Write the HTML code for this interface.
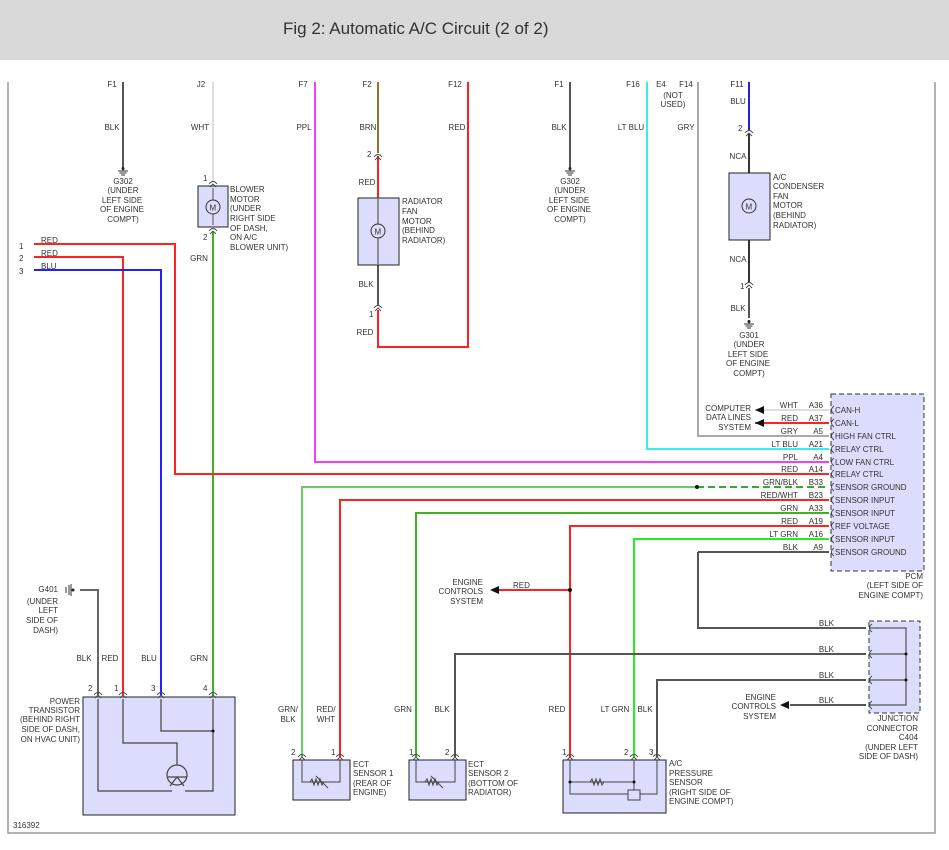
<!DOCTYPE html>
<html><head><meta charset="utf-8"><style>
body{margin:0;width:949px;height:850px;background:#fff;overflow:hidden;font-family:"Liberation Sans",sans-serif}
.hd{position:absolute;left:0;top:0;width:949px;height:60px;background:#d9d9d9}
.hd span{position:absolute;left:283px;top:19px;font-size:17px;color:#333}
svg{position:absolute;left:0;top:0}
text{font-family:"Liberation Sans",sans-serif;font-size:8px;fill:#333}
</style></head><body>
<div class="hd"><span>Fig 2: Automatic A/C Circuit (2 of 2)</span></div>
<svg width="949" height="850" viewBox="0 0 949 850">
<defs>
<g id="gnd"><line x1="0" y1="0" x2="0" y2="4" stroke="#333" stroke-width="1.2"/><line x1="-5" y1="4" x2="5" y2="4" stroke="#333"/><line x1="-3.5" y1="6" x2="3.5" y2="6" stroke="#333"/><line x1="-2" y1="8" x2="2" y2="8" stroke="#333"/><circle cx="0" cy="1.5" r="1.5" fill="#222"/></g>
<g id="pin"><path d="M-4,3 Q0,-2 4,3" fill="none" stroke="#444" stroke-width="0.9"/><path d="M-3,6 L0,3 L3,6" fill="none" stroke="#444" stroke-width="0.9"/></g>
<g id="pinL"><path d="M3,-4 Q-2,0 3,4" fill="none" stroke="#444" stroke-width="0.9"/></g>
</defs>
<!-- frame -->
<g stroke="#999" stroke-width="1.5" fill="none"><path d="M8,82 V833 H935 V82"/></g>
<!-- column wires -->
<g fill="none" stroke-width="2">
<line x1="123" y1="82" x2="123" y2="167" stroke="#555"/>
<line x1="213" y1="82" x2="213" y2="182" stroke="#ddd"/>
<line x1="213" y1="232" x2="213" y2="695" stroke="#3cb521"/>
<path d="M315,82 V462 H829" stroke="#f43df4"/>
<line x1="378" y1="82" x2="378" y2="153" stroke="#8b7530"/>
<line x1="378" y1="156" x2="378" y2="200" stroke="#f22"/>
<line x1="378" y1="265" x2="378" y2="305" stroke="#555"/>
<path d="M378,310 V347 H468 V82" stroke="#f22"/>
<path d="M34,244 H175 V474 H829" stroke="#f22"/>
<path d="M34,257 H123 V695" stroke="#f22"/>
<path d="M34,270 H161 V695" stroke="#22f"/>
<line x1="570" y1="82" x2="570" y2="167" stroke="#555"/>
<path d="M647,82 V449 H829" stroke="#3ee"/>
<path d="M698,82 V436 H829" stroke="#aaa"/>
<line x1="749" y1="82" x2="749" y2="130" stroke="#22d"/>
<line x1="749" y1="134" x2="749" y2="282" stroke="#333"/>
<line x1="749" y1="288" x2="749" y2="318" stroke="#555"/>
<line x1="755" y1="410" x2="829" y2="410" stroke="#ddd"/>
<line x1="755" y1="423" x2="829" y2="423" stroke="#f22"/>
<path d="M302,757 V487 H697" stroke="#6c6"/>
<line x1="697" y1="487" x2="829" y2="487" stroke="#3a3" stroke-dasharray="7,4"/>
<path d="M340,757 V500 H829" stroke="#f22"/>
<path d="M416,757 V513 H829" stroke="#3cb521"/>
<path d="M570,757 V526 H829" stroke="#f22"/>
<path d="M634,757 V539 H829" stroke="#2e2"/>
<path d="M698,552 H829" stroke="#555"/>
<path d="M698,552 V628 H866" stroke="#555"/>
<path d="M455,757 V654 H866" stroke="#555"/>
<path d="M657,757 V680 H866" stroke="#555"/>
<path d="M790,705 H866" stroke="#555"/>
<path d="M498,590 H570" stroke="#f22"/>
<path d="M80,590 H98 V695" stroke="#666"/>
</g>
<circle cx="697" cy="487" r="2" fill="#111"/><circle cx="570" cy="590" r="2" fill="#111"/>
<path d="M490,590 L499,586 L499,594 Z" fill="#111"/>
<path d="M780,705 L789,701 L789,709 Z" fill="#111"/>
<path d="M755,410 L764,406 L764,414 Z" fill="#111"/>
<path d="M755,423 L764,419 L764,427 Z" fill="#111"/>
<!-- G401 symbol -->
<g stroke="#333"><line x1="66" y1="587" x2="66" y2="593"/><line x1="69" y1="585" x2="69" y2="595"/><line x1="71" y1="584" x2="71" y2="596"/></g><circle cx="73" cy="590" r="1.5" fill="#222"/>
<!-- grounds -->
<use href="#gnd" x="123" y="167"/><use href="#gnd" x="570" y="167"/><use href="#gnd" x="749" y="320"/>
<!-- blower motor -->
<rect x="198" y="186" width="30" height="41" fill="#dcdcfc" stroke="#222"/>
<line x1="213" y1="188" x2="213" y2="225" stroke="#555"/>
<circle cx="213" cy="207" r="7" fill="#dcdcfc" stroke="#333"/><text x="209.5" y="210.5" font-size="9">M</text>
<use href="#pin" x="213" y="181"/><use href="#pin" x="213" y="228"/>
<!-- radiator fan -->
<rect x="358" y="198" width="41" height="67" fill="#dcdcfc" stroke="#222"/>
<line x1="378" y1="198" x2="378" y2="265" stroke="#777" stroke-width="1.5"/>
<circle cx="378" cy="231" r="7" fill="#dcdcfc" stroke="#333"/><text x="374.5" y="234.5" font-size="9">M</text>
<use href="#pin" x="378" y="154"/><use href="#pin" x="378" y="305"/>
<!-- condenser -->
<rect x="729" y="173" width="41" height="67" fill="#dcdcfc" stroke="#222"/>
<circle cx="749" cy="206" r="7" fill="#dcdcfc" stroke="#333"/><text x="745.5" y="209.5" font-size="9">M</text>
<use href="#pin" x="749" y="130"/><use href="#pin" x="749" y="282"/>
<!-- PCM -->
<rect x="831" y="394" width="93" height="177" fill="#dcdcfc" stroke="#333" stroke-dasharray="5,3"/>
<g>
<use href="#pinL" x="831" y="410"/><use href="#pinL" x="831" y="423"/><use href="#pinL" x="831" y="436"/><use href="#pinL" x="831" y="449"/><use href="#pinL" x="831" y="462"/><use href="#pinL" x="831" y="474"/><use href="#pinL" x="831" y="487"/><use href="#pinL" x="831" y="500"/><use href="#pinL" x="831" y="513"/><use href="#pinL" x="831" y="526"/><use href="#pinL" x="831" y="539"/><use href="#pinL" x="831" y="552"/>
</g>
<g>
<text x="835" y="413">CAN-H</text><text x="835" y="426">CAN-L</text><text x="835" y="439">HIGH FAN CTRL</text><text x="835" y="452">RELAY CTRL</text><text x="835" y="465">LOW FAN CTRL</text><text x="835" y="477">RELAY CTRL</text><text x="835" y="490">SENSOR GROUND</text><text x="835" y="503">SENSOR INPUT</text><text x="835" y="516">SENSOR INPUT</text><text x="835" y="529">REF VOLTAGE</text><text x="835" y="542">SENSOR INPUT</text><text x="835" y="555">SENSOR GROUND</text>
</g>
<g text-anchor="end">
<text x="798" y="408">WHT</text><text x="823" y="408">A36</text>
<text x="798" y="421">RED</text><text x="823" y="421">A37</text>
<text x="798" y="434">GRY</text><text x="823" y="434">A5</text>
<text x="798" y="447">LT BLU</text><text x="823" y="447">A21</text>
<text x="798" y="460">PPL</text><text x="823" y="460">A4</text>
<text x="798" y="472">RED</text><text x="823" y="472">A14</text>
<text x="798" y="485">GRN/BLK</text><text x="823" y="485">B33</text>
<text x="798" y="498">RED/WHT</text><text x="823" y="498">B23</text>
<text x="798" y="511">GRN</text><text x="823" y="511">A33</text>
<text x="798" y="524">RED</text><text x="823" y="524">A19</text>
<text x="798" y="537">LT GRN</text><text x="823" y="537">A16</text>
<text x="798" y="550">BLK</text><text x="823" y="550">A9</text>
<text x="751" y="411">COMPUTER</text><text x="751" y="420">DATA LINES</text><text x="751" y="430">SYSTEM</text>
<text x="923" y="579">PCM</text><text x="923" y="588">(LEFT SIDE OF</text><text x="923" y="598">ENGINE COMPT)</text>
</g>
<!-- junction connector -->
<rect x="869" y="621" width="51" height="92" fill="#dcdcfc" stroke="#333" stroke-dasharray="5,3"/>
<path d="M869,628 H906 V705 H869 M869,654 H906 M869,680 H906" fill="none" stroke="#555" stroke-width="1.2"/>
<circle cx="906" cy="654" r="1.5" fill="#111"/><circle cx="906" cy="680" r="1.5" fill="#111"/>
<use href="#pinL" x="869" y="628"/><use href="#pinL" x="869" y="654"/><use href="#pinL" x="869" y="680"/><use href="#pinL" x="869" y="705"/>
<g text-anchor="end"><text x="834" y="626">BLK</text><text x="834" y="652">BLK</text><text x="834" y="678">BLK</text><text x="834" y="703">BLK</text>
<text x="918" y="721">JUNCTION</text><text x="918" y="731">CONNECTOR</text><text x="918" y="740">C404</text><text x="918" y="750">(UNDER LEFT</text><text x="918" y="759">SIDE OF DASH)</text>
<text x="776" y="700">ENGINE</text><text x="776" y="709">CONTROLS</text><text x="776" y="719">SYSTEM</text>
<text x="483" y="585">ENGINE</text><text x="483" y="594">CONTROLS</text><text x="483" y="604">SYSTEM</text>
<text x="58" y="592">G401</text><text x="58" y="604">(UNDER</text><text x="58" y="613">LEFT</text><text x="58" y="623">SIDE OF</text><text x="58" y="633">DASH)</text>
<text x="80" y="704">POWER</text><text x="80" y="713">TRANSISTOR</text><text x="80" y="722">(BEHIND RIGHT</text><text x="80" y="732">SIDE OF DASH,</text><text x="80" y="742">ON HVAC UNIT)</text>
</g>
<text x="513" y="588">RED</text>
<!-- power transistor -->
<rect x="83" y="697" width="152" height="118" fill="#dcdcfc" stroke="#222"/>
<g fill="none" stroke="#444" stroke-width="1.2">
<path d="M98,699 V791 H172"/><path d="M123,699 V743 H177 V765"/><path d="M161,699 V731 H213"/><path d="M213,699 V791 H185"/>
<circle cx="177" cy="775" r="10"/><path d="M168,777 H187 M177,777 L170,786 M177,777 L184,786"/>
</g>
<circle cx="213" cy="731" r="1.5" fill="#111"/>
<use href="#pin" x="98" y="692"/><use href="#pin" x="123" y="692"/><use href="#pin" x="161" y="692"/><use href="#pin" x="213" y="692"/>
<text x="88" y="691">2</text><text x="114" y="691">1</text><text x="151" y="691">3</text><text x="203" y="691">4</text>
<!-- ECT sensors -->
<rect x="293" y="760" width="57" height="40" fill="#dcdcfc" stroke="#222"/>
<path d="M302,760 V782 H340 V760" fill="none" stroke="#444"/>
<path d="M310,782 l2,-3 l2,6 l2,-6 l2,6 l2,-6 l2,6 l2,-3" fill="none" stroke="#444"/><line x1="316" y1="776" x2="328" y2="788" stroke="#444"/>
<rect x="409" y="760" width="57" height="40" fill="#dcdcfc" stroke="#222"/>
<path d="M416,760 V782 H455 V760" fill="none" stroke="#444"/>
<path d="M425,782 l2,-3 l2,6 l2,-6 l2,6 l2,-6 l2,6 l2,-3" fill="none" stroke="#444"/><line x1="431" y1="776" x2="443" y2="788" stroke="#444"/>
<rect x="563" y="760" width="103" height="53" fill="#dcdcfc" stroke="#222"/>
<path d="M570,760 V794 H657 V760 M570,782 H634 V760 M634,782 V790" fill="none" stroke="#444"/>
<path d="M590,782 l2,-3 l2,6 l2,-6 l2,6 l2,-6 l2,6 l2,-3" fill="none" stroke="#444"/>
<rect x="628" y="790" width="12" height="10" fill="#dcdcfc" stroke="#444"/>
<circle cx="570" cy="782" r="1.5" fill="#111"/><circle cx="634" cy="782" r="1.5" fill="#111"/>
<use href="#pin" x="302" y="754"/><use href="#pin" x="340" y="754"/><use href="#pin" x="416" y="754"/><use href="#pin" x="455" y="754"/><use href="#pin" x="570" y="754"/><use href="#pin" x="634" y="754"/><use href="#pin" x="657" y="754"/>
<text x="291" y="755">2</text><text x="331" y="755">1</text><text x="409" y="755">1</text><text x="445" y="755">2</text><text x="562" y="755">1</text><text x="624" y="755">2</text><text x="649" y="755">3</text>
<text x="353" y="767">ECT</text><text x="353" y="776">SENSOR 1</text><text x="353" y="786">(REAR OF</text><text x="353" y="795">ENGINE)</text>
<text x="468" y="767">ECT</text><text x="468" y="776">SENSOR 2</text><text x="468" y="786">(BOTTOM OF</text><text x="468" y="795">RADIATOR)</text>
<text x="669" y="766">A/C</text><text x="669" y="776">PRESSURE</text><text x="669" y="785">SENSOR</text><text x="669" y="795">(RIGHT SIDE OF</text><text x="669" y="804">ENGINE COMPT)</text>
<text x="13" y="828">316392</text>
<!-- lower wire labels -->
<g text-anchor="middle">
<text x="84" y="661">BLK</text><text x="110" y="661">RED</text><text x="149" y="661">BLU</text><text x="199" y="661">GRN</text>
<text x="288" y="712">GRN/</text><text x="288" y="722">BLK</text><text x="326" y="712">RED/</text><text x="326" y="722">WHT</text>
<text x="403" y="712">GRN</text><text x="442" y="712">BLK</text><text x="557" y="712">RED</text><text x="615" y="712">LT GRN</text><text x="645" y="712">BLK</text>
</g>
<!-- top labels -->
<g text-anchor="middle">
<text x="112" y="87">F1</text><text x="201" y="87">J2</text><text x="303" y="87">F7</text><text x="367" y="87">F2</text><text x="455" y="87">F12</text>
<text x="559" y="87">F1</text><text x="633" y="87">F16</text><text x="661" y="87">E4</text><text x="686" y="87">F14</text><text x="737" y="87">F11</text>
<text x="673" y="98">(NOT</text><text x="673" y="107">USED)</text>
<text x="112" y="130">BLK</text><text x="200" y="130">WHT</text><text x="304" y="130">PPL</text><text x="368" y="130">BRN</text><text x="457" y="130">RED</text>
<text x="559" y="130">BLK</text><text x="631" y="130">LT BLU</text><text x="686" y="130">GRY</text><text x="738" y="104">BLU</text>
<text x="123" y="184">G302</text><text x="123" y="193">(UNDER</text><text x="122" y="203">LEFT SIDE</text><text x="122" y="212">OF ENGINE</text><text x="123" y="222">COMPT)</text>
<text x="570" y="184">G302</text><text x="570" y="193">(UNDER</text><text x="569" y="203">LEFT SIDE</text><text x="569" y="212">OF ENGINE</text><text x="570" y="222">COMPT)</text>
<text x="749" y="338">G301</text><text x="749" y="347">(UNDER</text><text x="748" y="357">LEFT SIDE</text><text x="748" y="366">OF ENGINE</text><text x="749" y="376">COMPT)</text>
<text x="199" y="261">GRN</text><text x="367" y="185">RED</text><text x="366" y="287">BLK</text><text x="365" y="335">RED</text>
<text x="738" y="159">NCA</text><text x="738" y="262">NCA</text><text x="738" y="311">BLK</text>
</g>
<text x="203" y="181">1</text><text x="203" y="240">2</text><text x="367" y="157">2</text><text x="369" y="317">1</text><text x="738" y="131">2</text><text x="740" y="289">1</text>
<text x="230" y="192">BLOWER</text><text x="230" y="202">MOTOR</text><text x="230" y="211">(UNDER</text><text x="230" y="221">RIGHT SIDE</text><text x="230" y="231">OF DASH,</text><text x="230" y="240">ON A/C</text><text x="230" y="250">BLOWER UNIT)</text>
<text x="402" y="204">RADIATOR</text><text x="402" y="214">FAN</text><text x="402" y="224">MOTOR</text><text x="402" y="233">(BEHIND</text><text x="402" y="243">RADIATOR)</text>
<text x="773" y="180">A/C</text><text x="773" y="189">CONDENSER</text><text x="773" y="199">FAN</text><text x="773" y="208">MOTOR</text><text x="773" y="218">(BEHIND</text><text x="773" y="228">RADIATOR)</text>
<text x="19" y="249">1</text><text x="19" y="261">2</text><text x="19" y="274">3</text>
<text x="41" y="243">RED</text><text x="41" y="256">RED</text><text x="41" y="269">BLU</text>
</svg>
</body></html>
